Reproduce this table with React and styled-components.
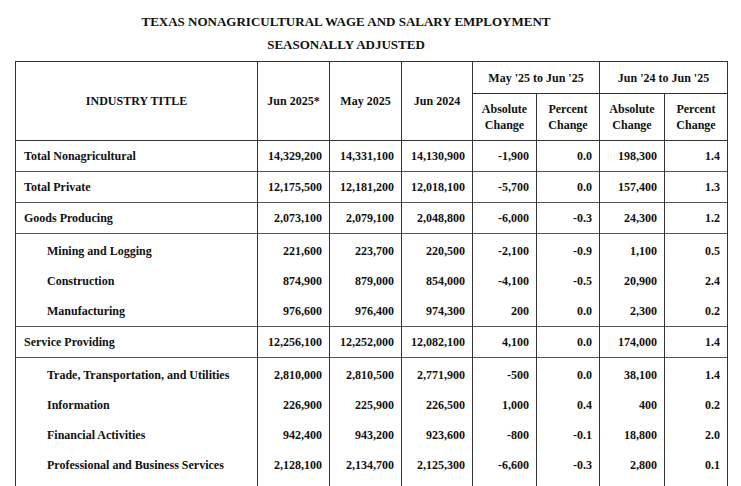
import React from 'react';
import styled, { createGlobalStyle } from 'styled-components';

const GlobalStyle = createGlobalStyle`
  body {
    margin: 0;
    background: #fff;
    color: #111;
    font-family: "Liberation Serif", "Times New Roman", serif;
  }
`;

const Page = styled.div`
  padding-top: 10px;
`;

const Title = styled.div`
  padding-right: 49px;
  text-align: center;
  font-weight: bold;
  font-size: 13px;
  line-height: 23px;
`;

const Table = styled.table`
  margin: 5px 0 0 15px;
  width: 713px;
  table-layout: fixed;
  border-collapse: collapse;
  font-size: 12px;
  font-weight: bold;
`;

const HeadCell = styled.th`
  border: 1px solid #333;
  text-align: center;
  vertical-align: middle;
  font-weight: bold;
  line-height: 16px;
  padding: 0;
  height: ${props => props.$h}px;
`;

const Cell = styled.td`
  border-left: 1px solid #333;
  border-right: 1px solid #333;
  border-top: ${props => (props.$lined ? '1px solid #555' : 'none')};
  height: 30px;
  padding-top: ${props => (props.$first ? 2 : 0)}px;
  padding-bottom: ${props => (props.$tail ? 14 : 0)}px;
  padding-right: 7px;
  padding-left: ${props => (props.$label ? (props.$sub ? 31 : 8) : 7)}px;
  text-align: ${props => (props.$label ? 'left' : 'right')};
  white-space: nowrap;
`;

const rows = [
  { name: 'Total Nonagricultural', v: ['14,329,200', '14,331,100', '14,130,900', '-1,900', '0.0', '198,300', '1.4'] },
  { name: 'Total Private', v: ['12,175,500', '12,181,200', '12,018,100', '-5,700', '0.0', '157,400', '1.3'] },
  { name: 'Goods Producing', v: ['2,073,100', '2,079,100', '2,048,800', '-6,000', '-0.3', '24,300', '1.2'] },
  { name: 'Mining and Logging', sub: true, first: true, v: ['221,600', '223,700', '220,500', '-2,100', '-0.9', '1,100', '0.5'] },
  { name: 'Construction', sub: true, v: ['874,900', '879,000', '854,000', '-4,100', '-0.5', '20,900', '2.4'] },
  { name: 'Manufacturing', sub: true, v: ['976,600', '976,400', '974,300', '200', '0.0', '2,300', '0.2'] },
  { name: 'Service Providing', v: ['12,256,100', '12,252,000', '12,082,100', '4,100', '0.0', '174,000', '1.4'] },
  { name: 'Trade, Transportation, and Utilities', sub: true, first: true, v: ['2,810,000', '2,810,500', '2,771,900', '-500', '0.0', '38,100', '1.4'] },
  { name: 'Information', sub: true, v: ['226,900', '225,900', '226,500', '1,000', '0.4', '400', '0.2'] },
  { name: 'Financial Activities', sub: true, v: ['942,400', '943,200', '923,600', '-800', '-0.1', '18,800', '2.0'] },
  { name: 'Professional and Business Services', sub: true, v: ['2,128,100', '2,134,700', '2,125,300', '-6,600', '-0.3', '2,800', '0.1'] },
];

const widths = [242, 72, 72, 71, 64, 63, 65, 63];

const App = () => {
  return (
    <>
      <GlobalStyle />
      <Page>
        <Title>TEXAS NONAGRICULTURAL WAGE AND SALARY EMPLOYMENT</Title>
        <Title>SEASONALLY ADJUSTED</Title>
        <Table>
          <colgroup>
            {widths.map((w, i) => <col key={i} style={{ width: w }} />)}
          </colgroup>
          <thead>
            <tr>
              <HeadCell rowSpan={2}>INDUSTRY TITLE</HeadCell>
              <HeadCell rowSpan={2}>Jun 2025*</HeadCell>
              <HeadCell rowSpan={2}>May 2025</HeadCell>
              <HeadCell rowSpan={2}>Jun 2024</HeadCell>
              <HeadCell colSpan={2} $h={31}>May '25 to Jun '25</HeadCell>
              <HeadCell colSpan={2} $h={31}>Jun '24 to Jun '25</HeadCell>
            </tr>
            <tr>
              <HeadCell $h={46}>Absolute<br />Change</HeadCell>
              <HeadCell $h={46}>Percent<br />Change</HeadCell>
              <HeadCell $h={46}>Absolute<br />Change</HeadCell>
              <HeadCell $h={46}>Percent<br />Change</HeadCell>
            </tr>
          </thead>
          <tbody>
            {rows.map((row, index) => {
              const lined = !row.sub || row.first;
              const tail = index === rows.length - 1;
              return (
                <tr key={index}>
                  <Cell $label $sub={row.sub} $first={row.first} $tail={tail} $lined={lined}>{row.name}</Cell>
                  {row.v.map((val, i) => (
                    <Cell key={i} $sub={row.sub} $first={row.first} $tail={tail} $lined={lined}>{val}</Cell>
                  ))}
                </tr>
              );
            })}
          </tbody>
        </Table>
      </Page>
    </>
  );
};

export default App;
